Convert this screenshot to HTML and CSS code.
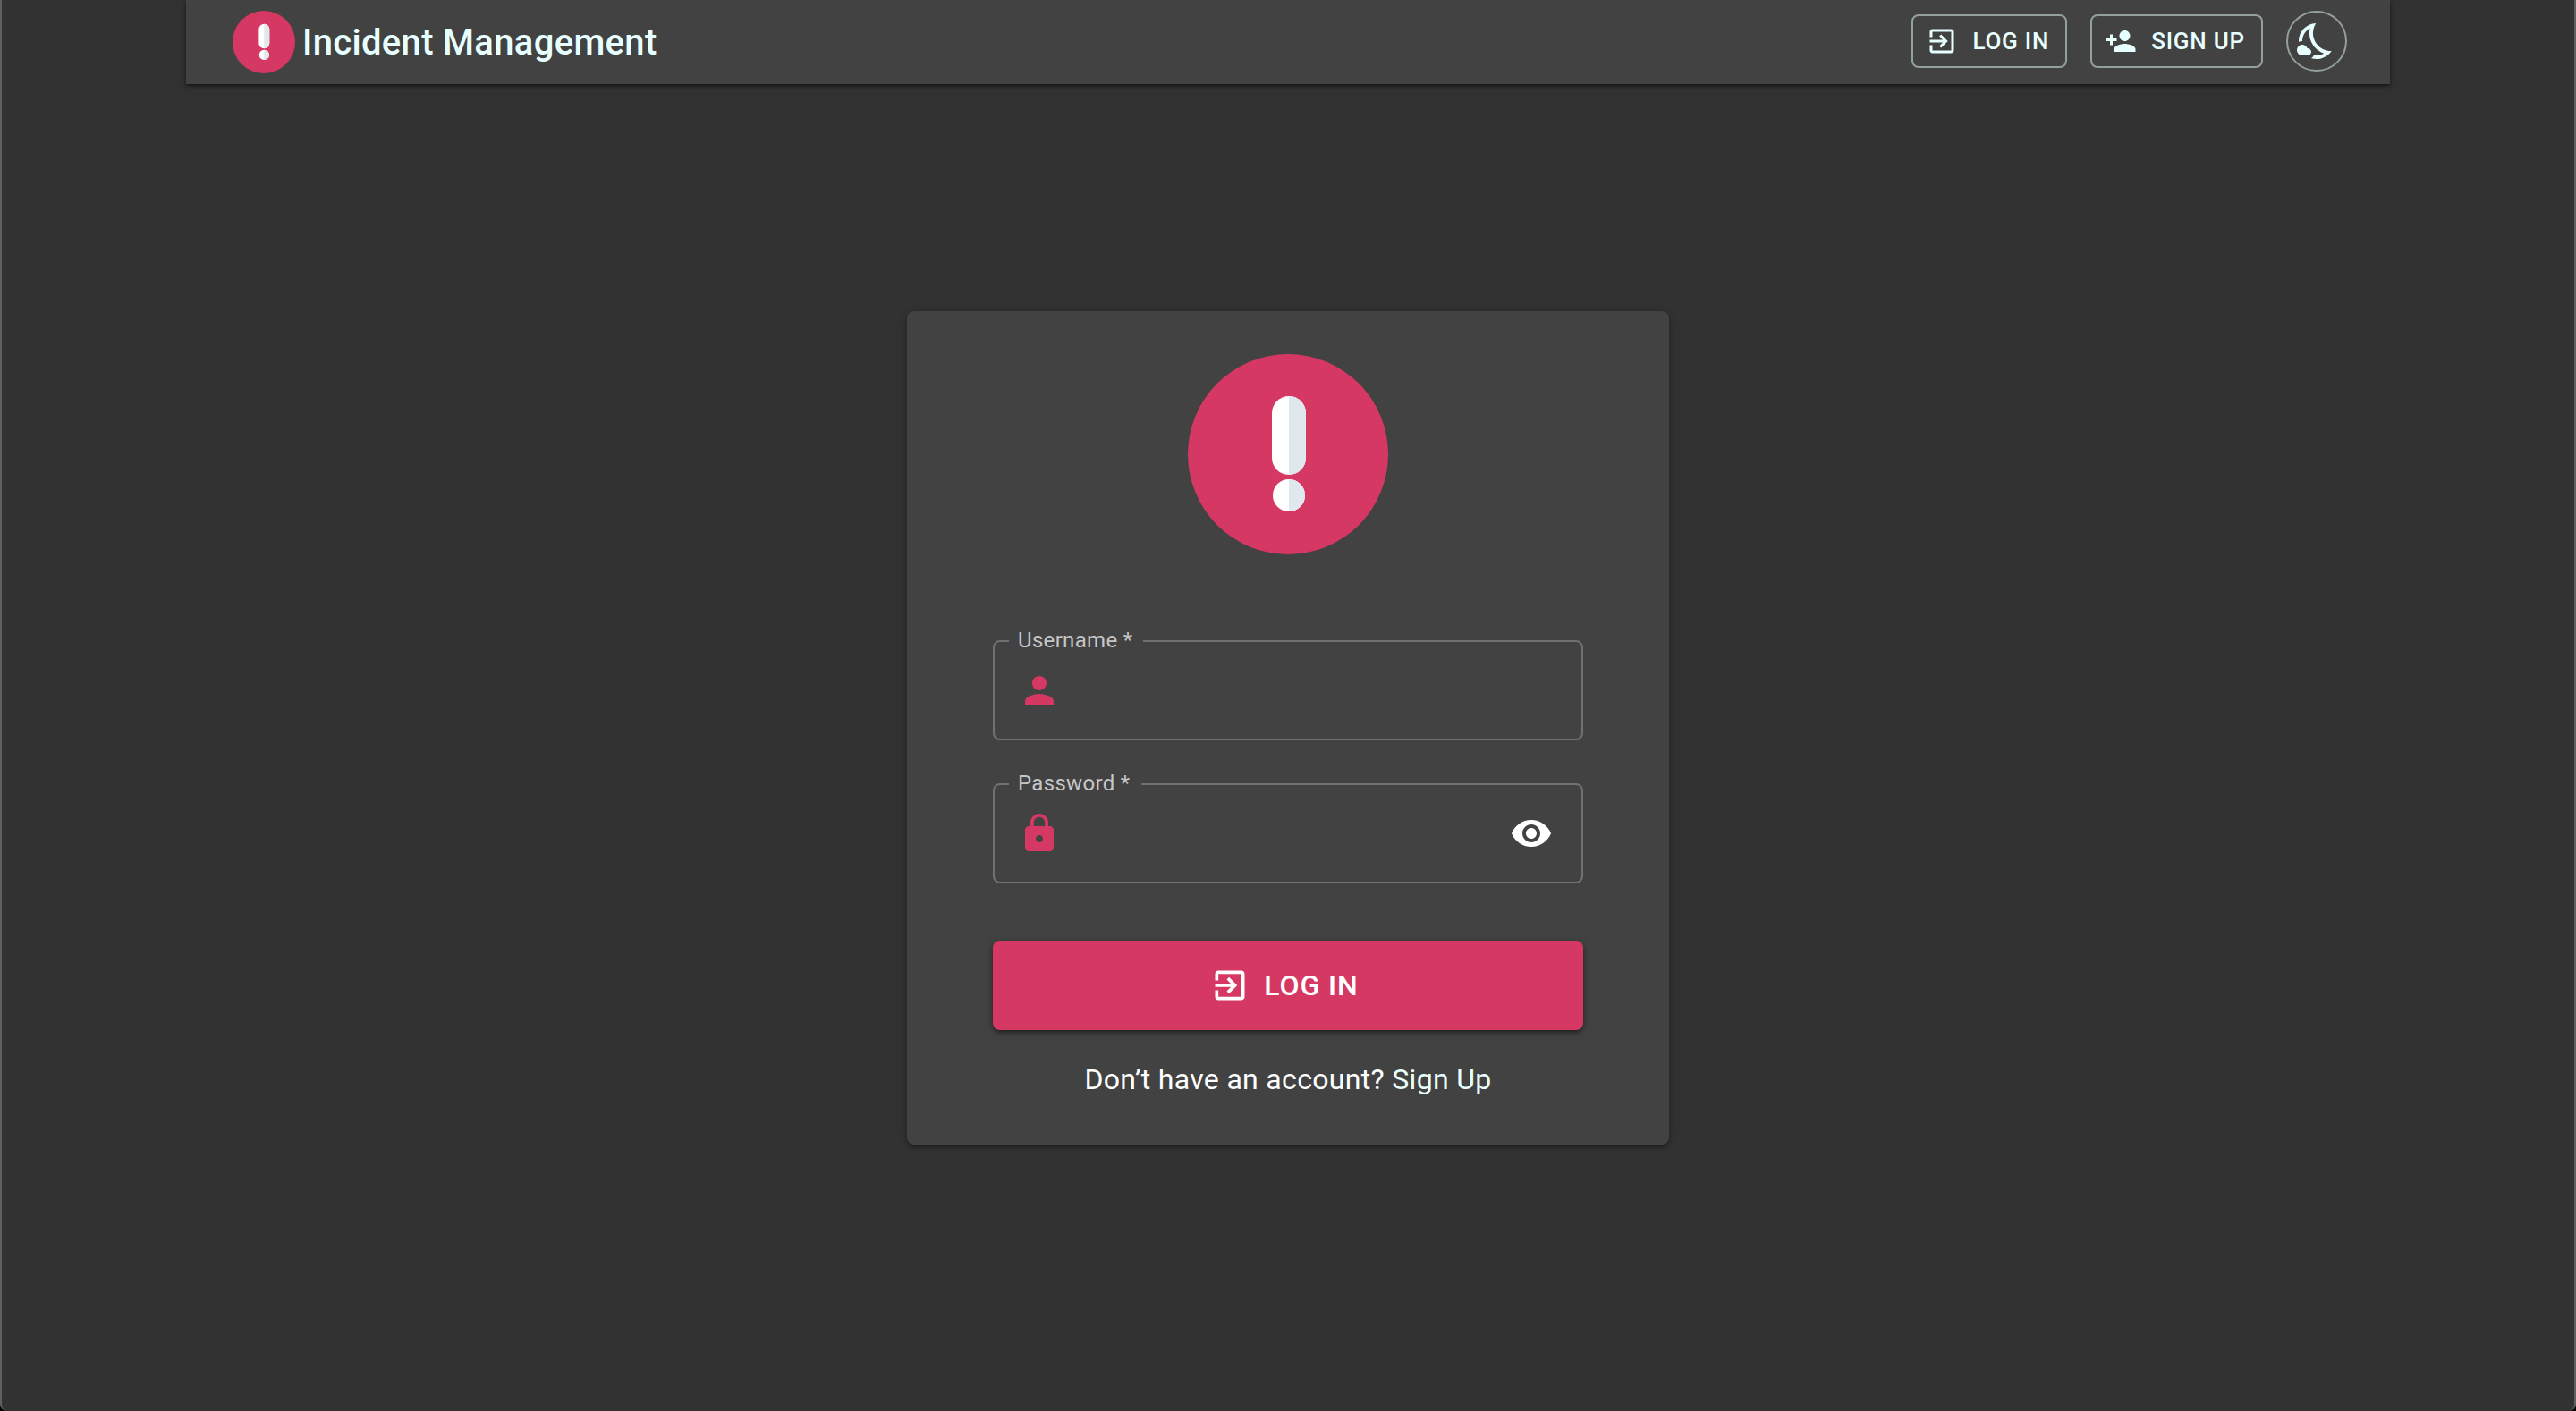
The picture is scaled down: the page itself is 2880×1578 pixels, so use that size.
FILE: index.html
```html
<!DOCTYPE html>
<html lang="en">
<head>
<meta charset="utf-8">
<meta name="viewport" content="width=device-width, initial-scale=1">
<title>Incident Management</title>
<link rel="stylesheet" href="styles.css">
</head>
<body>
<svg class="sprite" aria-hidden="true">
  <symbol id="logo" viewBox="0 0 224 224">
    <circle cx="112" cy="112" r="112" fill="#d63864"/>
    <rect x="94" y="47" width="38" height="88" rx="19" fill="#fff"/>
    <path d="M113 47a19 19 0 0 1 19 19v50a19 19 0 0 1-19 19z" fill="#dfe9ed"/>
    <circle cx="113" cy="158" r="18" fill="#fff"/>
    <path d="M113 140a18 18 0 0 1 0 36z" fill="#dfe9ed"/>
  </symbol>
  <symbol id="enter" viewBox="0 0 24 24">
    <path d="M10.090 15.590L11.500 17l5-5-5-5-1.410 1.410L12.670 11H3v2h9.670l-2.580 2.590zM19 3H5c-1.110 0-2 .9-2 2v4h2V5h14v14H5v-4H3v4c0 1.100.89 2 2 2h14c1.100 0 2-.9 2-2V5c0-1.100-.9-2-2-2z"/>
  </symbol>
  <symbol id="person-add" viewBox="0 0 24 24">
    <path d="M15 12c2.210 0 4-1.790 4-4s-1.790-4-4-4-4 1.790-4 4 1.790 4 4 4zm-9-2V7H4v3H1v2h3v3h2v-3h3v-2H6zm9 4c-2.670 0-8 1.340-8 4v2h16v-2c0-2.660-5.330-4-8-4z"/>
  </symbol>
  <symbol id="night" viewBox="0 0 24 24">
    <path d="M19.780 17.510c-2.470 0-6.570-1.330-8.680-5.430C8.770 7.570 10.600 3.600 11.630 2.010 6.270 2.200 1.980 6.590 1.980 12c0 .14.02.28.02.42.61-.26 1.280-.42 1.990-.42 0-3.090 1.730-5.770 4.300-7.100C7.780 7.090 7.740 9.940 9.320 13c1.570 3.040 4.180 4.950 6.800 5.860-1.230.74-2.650 1.150-4.130 1.150-.5 0-1-.05-1.480-.14-.37.7-.94 1.270-1.640 1.640.98.32 2.030.5 3.110.5 3.500 0 6.580-1.800 8.370-4.520-.18.02-.38.02-.57.02zM7 16h-.18C6.400 14.840 5.300 14 4 14c-1.660 0-3 1.340-3 3s1.340 3 3 3h3c1.100 0 2-.9 2-2s-.9-2-2-2z"/>
  </symbol>
  <symbol id="person" viewBox="0 0 24 24">
    <path d="M12 12c2.210 0 4-1.790 4-4s-1.790-4-4-4-4 1.790-4 4 1.790 4 4 4zm0 2c-2.670 0-8 1.340-8 4v2h16v-2c0-2.660-5.330-4-8-4z"/>
  </symbol>
  <symbol id="lock" viewBox="0 0 24 24">
    <path d="M18 8h-1V6c0-2.760-2.240-5-5-5S7 3.240 7 6v2H6c-1.100 0-2 .9-2 2v10c0 1.100.9 2 2 2h12c1.100 0 2-.9 2-2V10c0-1.100-.9-2-2-2zm-6 9c-1.100 0-2-.9-2-2s.9-2 2-2 2 .9 2 2-.9 2-2 2zm3.100-9H8.900V6c0-1.710 1.390-3.100 3.100-3.100s3.100 1.390 3.100 3.100v2z"/>
  </symbol>
  <symbol id="eye" viewBox="0 0 24 24">
    <path d="M12 4.500C7 4.500 2.730 7.610 1 12c1.730 4.390 6 7.500 11 7.500s9.270-3.110 11-7.500c-1.730-4.390-6-7.500-11-7.500zM12 17c-2.760 0-5-2.240-5-5s2.240-5 5-5 5 2.240 5 5-2.240 5-5 5zm0-8c-1.660 0-3 1.340-3 3s1.340 3 3 3 3-1.340 3-3-1.340-3-3-3z"/>
  </symbol>
</svg>

<header class="navbar">
  <a class="brand" href="#">
    <svg class="brand-logo" aria-hidden="true"><use href="#logo"/></svg>
    <span>Incident Management</span>
  </a>
  <nav class="nav-actions">
    <button class="btn-outlined" type="button"><svg class="icon-small" aria-hidden="true"><use href="#enter"/></svg>LOG IN</button>
    <button class="btn-outlined" type="button"><svg class="icon-small" aria-hidden="true"><use href="#person-add"/></svg>SIGN UP</button>
    <button class="btn-round" type="button" aria-label="Toggle dark mode"><svg class="icon" aria-hidden="true"><use href="#night"/></svg></button>
  </nav>
</header>

<main class="page">
  <form class="card">
    <svg class="card-logo" aria-hidden="true"><use href="#logo"/></svg>
    <fieldset class="field">
      <legend class="field-legend"><label for="username">Username *</label></legend>
      <div class="field-row">
        <svg class="icon accent" aria-hidden="true"><use href="#person"/></svg>
        <input class="field-input" id="username" type="text" required>
      </div>
    </fieldset>
    <fieldset class="field">
      <legend class="field-legend"><label for="password">Password *</label></legend>
      <div class="field-row">
        <svg class="icon accent" aria-hidden="true"><use href="#lock"/></svg>
        <input class="field-input" id="password" type="password" required>
        <button class="btn-icon" type="button" aria-label="Show password"><svg class="icon" aria-hidden="true"><use href="#eye"/></svg></button>
      </div>
    </fieldset>
    <button class="btn-submit" type="submit"><svg class="icon-medium" aria-hidden="true"><use href="#enter"/></svg>LOG IN</button>
    <p class="signup">Don’t have an account? <a class="signup-link" href="#">Sign Up</a></p>
  </form>
</main>
</body>
</html>
```
FILE: styles.css
```css
:root {
  --bg: #323232;
  --paper: #424242;
  --accent: #d63864;
  --ice: #e8ffff;
}

*,
*::before,
*::after {
  box-sizing: border-box;
}

html {
  background: #000;
}

body {
  min-height: 100vh;
  margin: 0;
  border: solid #606060;
  border-width: 0 2px;
  border-radius: 0 0 8px 8px;
  background: var(--bg);
  color: #fff;
  font-family: Roboto, "Liberation Sans", sans-serif;
  font-size: 32px;
  letter-spacing: 0.01em;
}

button {
  font-family: inherit;
  font-weight: 500;
  letter-spacing: 0.03em;
  cursor: pointer;
}

svg {
  display: block;
  flex: none;
  fill: currentColor;
}

.sprite {
  position: absolute;
  width: 0;
  height: 0;
}

.icon {
  width: 48px;
  height: 48px;
}

.icon-medium {
  width: 44px;
  height: 44px;
}

.icon-small {
  width: 36px;
  height: 36px;
}

.accent {
  color: var(--accent);
}

.navbar {
  display: flex;
  align-items: flex-start;
  justify-content: space-between;
  max-width: 2464px;
  margin: 0 auto;
  padding: 12px 48px 12px 52px;
  background: var(--paper);
  color: var(--ice);
  box-shadow: 0 2px 8px rgba(0, 0, 0, 0.4), 0 2px 2px rgba(0, 0, 0, 0.3);
}

.brand {
  display: flex;
  align-items: center;
  gap: 8px;
  color: inherit;
  font-size: 40px;
  font-weight: 500;
  text-decoration: none;
}

.brand-logo {
  width: 70px;
  height: 70px;
}

.nav-actions {
  display: flex;
  align-items: center;
  gap: 26px;
}

.btn-outlined {
  display: flex;
  align-items: center;
  gap: 16px;
  padding: 6px 18px 6px 14px;
  border: 2px solid #93a09f;
  border-radius: 8px;
  background: none;
  color: inherit;
  font-size: 26px;
  line-height: 44px;
}

.btn-round {
  padding: 8px;
  border: 2px solid #93a09f;
  border-radius: 50%;
  background: none;
  color: inherit;
}

.page {
  padding: 254px 24px 24px;
}

.card {
  display: flex;
  flex-direction: column;
  max-width: 852px;
  margin: 0 auto;
  padding: 48px 96px;
  border-radius: 8px;
  background: var(--paper);
  box-shadow: 0 4px 4px -2px rgba(0, 0, 0, 0.3), 0 2px 8px rgba(0, 0, 0, 0.3);
}

.card-logo {
  align-self: center;
  width: 224px;
  height: 224px;
  margin-bottom: 84px;
}

.field {
  min-width: 0;
  margin: 0 0 36px;
  padding: 0 32px 12px 16px;
  border: 2px solid #717171;
  border-radius: 8px;
}

.field-legend {
  padding: 0 12px 2px 10px;
  color: #c6c6c6;
  font-size: 24px;
  line-height: 24px;
}

.field-row {
  display: flex;
  align-items: center;
  gap: 16px;
  height: 84px;
  padding-left: 10px;
}

.field-input {
  flex: 1;
  min-width: 0;
  padding: 0;
  border: 0;
  outline: 0;
  background: none;
  color: #fff;
  font: inherit;
}

.btn-icon {
  padding: 0;
  border: 0;
  background: none;
  color: #fff;
}

.btn-submit {
  display: flex;
  align-items: center;
  justify-content: center;
  gap: 16px;
  margin-top: 28px;
  padding: 22px 26px 22px 18px;
  border: 0;
  border-radius: 8px;
  background: var(--accent);
  color: #fff;
  font-size: 32px;
  line-height: 56px;
  box-shadow: 0 4px 4px -1px rgba(0, 0, 0, 0.3), 0 2px 8px rgba(0, 0, 0, 0.3);
}

.signup {
  margin: 32px 0 0;
  padding-bottom: 2px;
  line-height: 46px;
  text-align: center;
}

.signup-link {
  color: var(--ice);
  text-decoration: none;
}
```
